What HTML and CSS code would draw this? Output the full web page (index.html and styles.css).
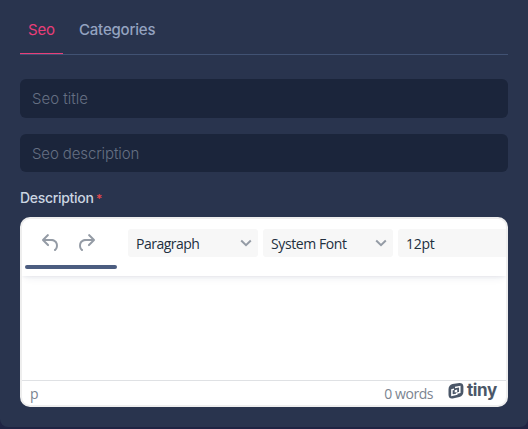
FILE: index.html
```html
<!DOCTYPE html>
<html lang="en">
<head>
<meta charset="utf-8">
<title>Seo</title>
<link rel="stylesheet" href="styles.css">
</head>
<body>
<main class="card">
  <nav class="tabs">
    <a class="tab tab-active"><span class="seo-text">Seo</span></a>
    <a class="tab"><span class="categories-text">Categories</span></a>
  </nav>
  <input class="field" type="text" placeholder="Seo title">
  <input class="field field-description" type="text" placeholder="Seo description">
  <label class="label">Description <span class="required">*</span></label>
  <section class="editor">
    <div class="toolbar">
      <div class="history">
        <div class="buttons">
          <svg width="24" height="24" viewBox="0 0 24 24"><path d="M6.4 8H12c3.7 0 6.2 2 6.8 5.1.6 2.7-.4 5.6-2.3 6.8a1 1 0 0 1-1-1.8c1.1-.6 1.8-2.7 1.4-4.6-.5-2.1-2.1-3.5-4.9-3.5H6.4l3.3 3.3a1 1 0 1 1-1.4 1.4l-5-5a1 1 0 0 1 0-1.4l5-5a1 1 0 0 1 1.4 1.4L6.4 8Z"/></svg>
          <svg width="24" height="24" viewBox="0 0 24 24"><path transform="matrix(-1 0 0 1 24 0)" d="M6.4 8H12c3.7 0 6.2 2 6.8 5.1.6 2.7-.4 5.6-2.3 6.8a1 1 0 0 1-1-1.8c1.1-.6 1.8-2.7 1.4-4.6-.5-2.1-2.1-3.5-4.9-3.5H6.4l3.3 3.3a1 1 0 1 1-1.4 1.4l-5-5a1 1 0 0 1 0-1.4l5-5a1 1 0 0 1 1.4 1.4L6.4 8Z"/></svg>
        </div>
        <div class="scrollbar"></div>
      </div>
      <div class="select"><span class="paragraph-text">Paragraph</span><svg class="chevron" width="12" height="8" viewBox="0 0 12 8"><path d="m1.2 1.5 4.8 4.7 4.8-4.7"/></svg></div>
      <div class="select"><span class="font-text">System Font</span><svg class="chevron" width="12" height="8" viewBox="0 0 12 8"><path d="m1.2 1.5 4.8 4.7 4.8-4.7"/></svg></div>
      <div class="select"><span class="size-text">12pt</span></div>
    </div>
    <div class="content"></div>
    <footer class="status">
      <span>p</span>
      <span class="words">0 words</span>
      <span class="brand">
        <svg width="16" height="16" viewBox="0 0 16 16"><path fill="#4b5768" d="M4.5 1.1 11.4.1Q15 0 15.4 3.4v5.4q0 4-4 5.2l-6.7 1.5Q.8 16 .5 12V6.6q0-4.4 4-5.5Z"/><path fill="none" stroke="#fff" stroke-width="1.5" d="M7 4.4 11.8 3.6V9.4L9.5 10M6 6.3 3.9 6.8V12.3L8.8 11.2V9.5"/><path fill="#fff" d="m6.7 7.2 2.5-.6v2.3l-2.5.6Z"/></svg>
        <span class="tiny-text">tiny</span>
      </span>
    </footer>
  </section>
</main>
</body>
</html>
```
FILE: styles.css
```css
* { box-sizing: border-box; }
body { margin: 0; height: 429px; background: #1f2443; overflow: hidden; font-family: Inter, "Liberation Sans", sans-serif; }
.card { height: 427px; padding: 0 20px; background: #29344e; border-radius: 0 0 8px 8px; }
.tabs { display: flex; height: 55px; border-bottom: 1px solid #415273; }
.tab { height: 54px; padding: 20px 8px 0; font-size: 15px; line-height: 20px; color: #94a3c0; white-space: nowrap; font-weight: 500; }
.tab + .tab { margin-left: 8px; }
.tab-active { width: 43px; color: #e83e78; border-bottom: 1px solid #e83e78; font-weight: 400; }
.seo-text { letter-spacing: -.2px; }
.categories-text { letter-spacing: -.2px; }
.field { display: block; width: 100%; height: 39px; margin-top: 24px; padding: 0 12px; border: 0; border-radius: 6px; background: #1b253b; font: 300 15px Inter, sans-serif; letter-spacing: 0; }
.field::placeholder { color: #667083; opacity: 1; }
.field-description { height: 38px; margin-top: 16px; letter-spacing: -.12px; }
.label { display: block; height: 45px; padding-top: 16px; font-size: 14px; line-height: 19px; font-weight: 500; letter-spacing: -.3px; color: #cbd5e1; }
.required { margin-left: -1px; font-size: 12px; color: #e5484d; }
.editor { display: flex; flex-direction: column; height: 190px; border: 2px solid #eee; border-radius: 10px; background: #fff; overflow: hidden; font-family: "Open Sans", "Noto Sans", sans-serif; }
.toolbar { display: flex; height: 57px; padding: 10px 0 0 3px; gap: 5px; box-shadow: 0 2px 3px -1px #22314f12, 0 5px 8px -3px #22314f12; }
.history { width: 92px; margin-right: 6px; flex: none; }
.buttons { display: flex; height: 36px; padding: 2px 0 0 14px; gap: 11px; }
.buttons svg { fill: #949ba5; }
.chevron { margin-top: -2px; fill: none; stroke: #949ba5; stroke-width: 2; }
.scrollbar { height: 4px; border-radius: 2px; background: #4c5d80; }
.select { display: flex; justify-content: space-between; align-items: center; flex: none; width: 130px; height: 28px; padding: 1px 6px 0 8px; border-radius: 3px; background: #f7f7f7; color: #222f3e; font-size: 14px; white-space: nowrap; }
.paragraph-text { letter-spacing: -.5px; }
.font-text { letter-spacing: -.4px; }
.size-text { letter-spacing: -.3px; }
.content { flex: 1; }
.status { display: flex; align-items: center; height: 25px; padding: 0 9px 0 8px; border-top: 1px solid #dfe1e4; color: #7b8490; font-size: 14px; }
.words { margin-left: auto; letter-spacing: -.45px; }
.brand { display: flex; align-items: center; width: 49px; margin: -5px 0 0 15px; color: #4b5768; }
.brand svg { flex: none; }
.tiny-text { margin: -1px 0 0 3px; font: 700 17px/20px Inter, sans-serif; letter-spacing: -.4px; }
```
